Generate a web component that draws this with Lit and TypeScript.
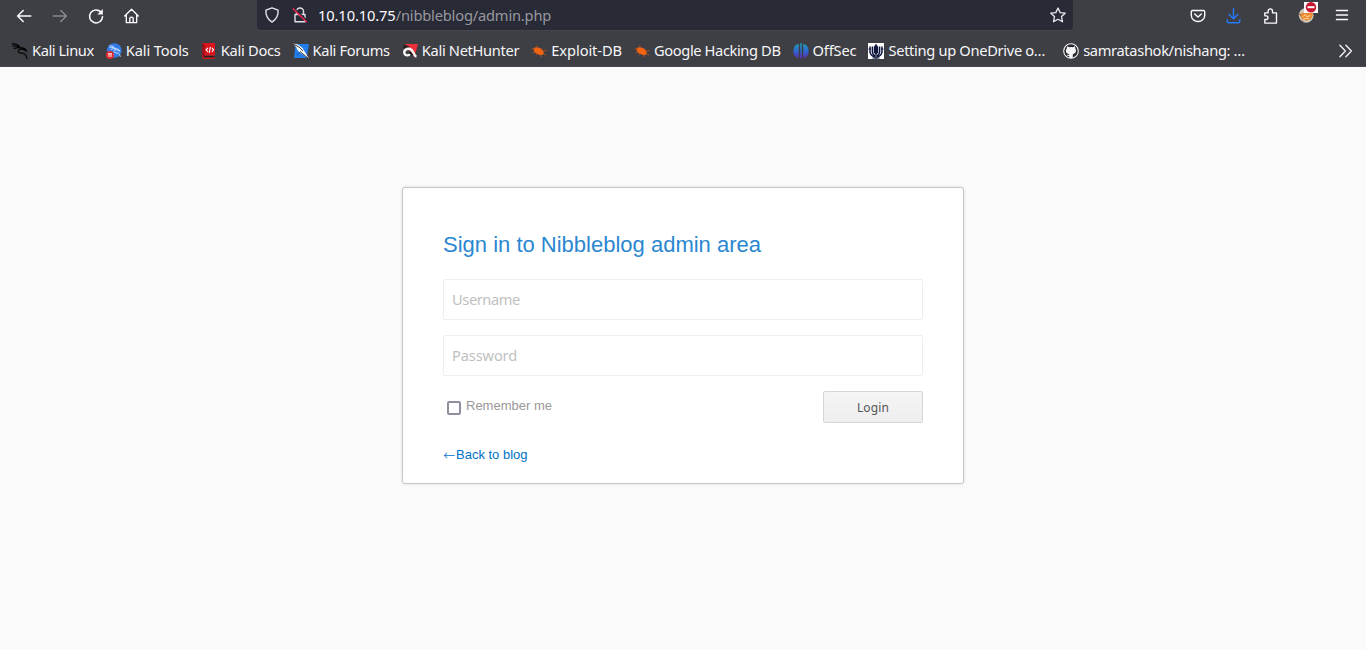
import { LitElement, html, css, svg } from "lit";
import { customElement } from "lit/decorators.js";
import { styleMap } from "lit/directives/style-map.js";

const line = (d: string, color = "#fbfbfe", w = 1.5) =>
  svg`<path d=${d} fill="none" stroke=${color} stroke-width=${w} stroke-linecap="round" stroke-linejoin="round"/>`;

const dragon = (color: string) => svg`
  <path d="M0.3 .8C4 .6 6.5 1.5 8 4.6M.8 3.1C4 2.4 6.5 3.1 8.4 4.9M2.4 5.6C4.5 4.4 6.5 4.3 8.6 4.9C11.6 4.4 13.6 5.6 14.6 8L11.4 6.4C8.2 5.4 5.8 6.8 6.3 8.8C6.9 10.8 10 9.6 12.7 11C14.3 12 14.6 13.5 15 15.4" fill="none" stroke=${color} stroke-width="1.2" stroke-linecap="round"/>`;

const bug = svg`
  <path d="M2.6 5.2C5 3.3 9 4.4 11.8 7.4C13.5 9.8 12.6 11.8 10.5 12C7.5 12.2 2.8 9.5 2.6 7Z" fill="#f26411"/>
  <path d="M.6 6L4 6M5.5 2.5L7 5.2M10 5L11 7.5M12 8L15.5 7.4M12 10L15 12.4M9.5 11.5L10.5 14M4 9L1.5 10.2M6.5 10.5L5 12.2" stroke="#b5501f" stroke-width=".9" fill="none"/>`;

const icons: Record<string, unknown> = {
  back: line("M14.8 8H1.6M7.2 2.5L1.6 8L7.2 13.5"),
  forward: line("M1.2 8H14.4M8.8 2.5L14.4 8L8.8 13.5", "#88888d"),
  reload: svg`${line("M13.4 4.8A6.5 6.5 0 1 0 14.5 8.5")}<path d="M14.8 1V6.5H9.3Z" fill="#fbfbfe"/>`,
  home: line("M.7 8L7.5 1.2L14.3 8M2.3 7V14.6H12.7V7M5.8 14.3V10.3Q5.8 9.2 7.5 9.2Q9.2 9.2 9.2 10.3V14.3", "#fbfbfe", 1.35),
  shield: line("M8 .9L14.1 3.2Q14.6 10.8 8 15.1Q1.4 10.8 1.9 3.2Z", "#e3e3e8", 1.4),
  lock: svg`${line("M4.5 7.3V4.5A3.5 3.5 0 0 1 11.5 4.5V7.3M3 7.5H13V14.8H3Z", "#e0e0e5", 1.4)}${line("M2 1.4L15 13.6", "#282a36", 1.5)}${line("M1.2 1.9L14.4 14.7", "#e22850", 1.5)}`,
  star: line("M8 1L10.2 5.6L15.2 6.2L11.5 9.6L12.5 14.8L8 12.3L3.5 14.8L4.5 9.6L.8 6.2L5.8 5.6Z", "#e9e9ee", 1.3),
  pocket: line("M2.5 2.5H13.5Q14.7 2.5 14.7 3.7V7.5A6.7 6 0 0 1 1.3 7.5V3.7Q1.3 2.5 2.5 2.5ZM4.7 6L8 9.1L11.3 6", "#fbfbfe", 1.4),
  download: line("M7.5 .5V10.5M3.1 6.4L7.5 10.7L11.9 6.4M1.2 11.8V13.3Q1.2 14.8 2.7 14.8H12.3Q13.8 14.8 13.8 13.3V11.8", "#2779ff", 1.4),
  puzzle: line("M6.1 4.8V3A2.2 2.2 0 0 1 10.5 3V4.8H14.5V15.1H2.8V11.5H4.6A1.9 1.9 0 0 0 4.6 7.8H2.8V4.8Z", "#fbfbfe", 1.35),
  menu: line("M2.4 2.5H13.6M2.4 7H13.6M2.4 11.5H13.6", "#fbfbfe", 1.3),
  more: line("M2.9 2.3L8.4 8L2.9 13.7M8.9 2.3L14.4 8L8.9 13.7", "#f0f0f5", 1.4),
  linux: dragon("#050505"),
  tools: svg`<circle cx="8.3" cy="7.5" r="7.3" fill="#347de9"/><g transform="translate(3.4 2.4) scale(.72)">${dragon("#d8e8ff")}</g><circle cx="4" cy="12" r="4" fill="#e22b30"/><path d="M2 10.8H6M3 10.8V14M5 10.8V14" stroke="#fff" stroke-width=".9"/>`,
  docs: svg`<path d="M1.5 0H14V12.5H3V14H14V16H3Q1.5 16 1.5 14Z" fill="#d9161d"/><path d="M1.5 1H3.7V12.5L1.5 14Z" fill="#9e0c17"/><path d="M3 13H13.5V14.5H3Z" fill="#222"/><path d="M6.9 4.8L5.1 6.8L6.9 8.8M10.9 4.8L12.6 6.8L10.9 8.8M9.4 4L8.2 9.8" fill="none" stroke="#fff" stroke-width="1.1"/>`,
  forums: svg`<path d="M2.5 1H16L13.6 15H1Z" fill="#227ce9"/><path d="M0 .5L5 1.5L9.5 5L12 9L16 15.5L9 11L5 8L3 4Z" fill="#f5f5f3"/><path d="M0 1L6 4L10 8M7 8.5L15.5 15.5" fill="none" stroke="#4b423c" stroke-width="1"/><path d="M4 12L7 9.5" stroke="#1556b4"/>`,
  nethunter: svg`<path d="M2 1H16L12.2 14.5L10 10L4 5Z" fill="#ee303b"/><path d="M2 1L8 4L4 6L1 5Z" fill="#222"/><path d="M14.5 13.5C11.5 13 11.8 7.2 8 6C4.5 5 1.4 7.5 2.5 10.5C3.5 12.9 7 13 7.5 11" fill="none" stroke="#f7f7f7" stroke-width="2.4"/><path d="M7.5 8.8L10.5 12" stroke="#151517" stroke-width="1.6"/>`,
  bug,
  offsec: svg`<defs><linearGradient id="offsec" gradientUnits="userSpaceOnUse" x1="0" y1="0" x2="0" y2="16"><stop stop-color="#1aa4bc"/><stop offset=".55" stop-color="#3161cc"/><stop offset="1" stop-color="#6427bb"/></linearGradient></defs><path d="M5.7.8V15A7.4 7.4 0 0 1 5.7.8ZM7.2.3H8.8V15.7H7.2ZM10.3.8A7.4 7.4 0 0 1 10.3 15Z" fill="url(#offsec)"/>`,
  onedrive: svg`<path d="M0 0H16V16H0Z" fill="#fff"/><path d="M8 .8L10.2 4V9.5L8 12L5.8 9.5V4Z" fill="#11183f"/><path d="M4.4 3.4V9Q4.6 12 7.4 13M11.6 3.4V9Q11.4 12 8.6 13M2 3.5V9Q2.5 13 7.5 14.2M14 3.5V9Q13.5 13 8.5 14.2" fill="none" stroke="#11183f" stroke-width="1.5"/><path d="M8 11V16M4.5 15H11.5M.5 6H3M13 6H15.5" stroke="#11183f"/>`,
  github: svg`<circle cx="8" cy="8" r="7.3" fill="#28272d" stroke="#f4f4f4" stroke-width="1.1"/><path d="M4 3.2L6.3 4.3Q8 3.9 9.7 4.3L12 3.2L12.3 5.5Q14 8 12 10Q11 11 9.8 11.2V15H6.2V13Q4.5 13.4 3.5 11.8L6.2 12V11.2Q3 10.6 2.9 8Q2.8 6.6 3.8 5.5Z" fill="#f6f6f6"/>`,
  profile: svg`<circle cx="8.2" cy="7.3" r="7.4" fill="#cfc6bb"/><path d="M1.8 6Q5 4 8 5H15Q14.5 12.4 8.4 12.6Q3 12.4 1.8 6Z" fill="#ed8a2c"/><path d="M4.5 8.6L7.5 6.8L9 8.8L12.5 7.5M5.5 11Q8.5 9.4 11 11" fill="none" stroke="#f9d8ad"/><path d="M0 5.5L3 7.5M3 12.5L6 14.4" stroke="#80604c"/>`,
};

const icon = (name: string) => html`<svg class="icon ${name}" width="16" height="16" viewBox="0 0 16 16">${icons[name]}</svg>`;

interface Bookmark { icon: string; label: string; tracking: number; }

const bookmarks: Bookmark[] = [
  { icon: "linux", label: "Kali Linux", tracking: -0.42 },
  { icon: "tools", label: "Kali Tools", tracking: -0.15 },
  { icon: "docs", label: "Kali Docs", tracking: -0.27 },
  { icon: "forums", label: "Kali Forums", tracking: -0.34 },
  { icon: "nethunter", label: "Kali NetHunter", tracking: -0.32 },
  { icon: "bug", label: "Exploit-DB", tracking: -0.08 },
  { icon: "bug", label: "Google Hacking DB", tracking: -0.39 },
  { icon: "offsec", label: "OffSec", tracking: -0.16 },
  { icon: "onedrive", label: "Setting up OneDrive o…", tracking: -0.32 },
  { icon: "github", label: "samratashok/nishang: …", tracking: -0.34 },
];

@customElement("browser-chrome")
class BrowserChrome extends LitElement {
  static styles = css`
    :host { display: flex; flex-direction: column; height: 67px; flex: none; box-sizing: border-box; background: #3e3f44; color: #f6f6f9; font: 14.667px "Noto Sans", sans-serif; border-bottom: 1px solid #4a4655; }
    svg { display: block; flex: none; overflow: visible; }
    .nav { display: flex; height: 31px; align-items: center; flex: none; }
    .left { display: flex; gap: 20px; padding-left: 16px; width: 241px; height: 31px; align-items: center; }
    .url { display: flex; align-items: center; box-sizing: border-box; width: 816px; height: 31px; background: #282a36; padding: 0 7px; border-bottom: 1px solid #45464d; border-radius: 0 0 4px 4px; }
    .shield { margin-right: 12px; }
    .address { margin-left: 10px; padding-bottom: 1px; flex: 1; color: #98989f; white-space: pre; letter-spacing: -0.18px; line-height: 20px; }
    .host { color: #fbfbfe; letter-spacing: -0.11px; }
    .right { display: flex; gap: 20px; flex: 1; padding: 0 16px; justify-content: flex-end; }
    .user { display: grid; position: relative; }
    .badge { position: absolute; left: 6px; top: -6px; }
    .bookmarks { display: flex; height: 35px; align-items: center; padding: 4px 13px 0 12px; box-sizing: border-box; }
    .list { display: flex; gap: 12px; flex: 1; }
    .item { display: flex; align-items: center; gap: 4px; white-space: nowrap; line-height: 20px; }
    .name { padding-bottom: 2px; }
    .item:last-child { margin-left: 6px; }
  `;
  render() {
    return html`
      <nav class="nav">
        <div class="left">${["back", "forward", "reload", "home"].map(icon)}</div>
        <div class="url">${icon("shield")}${icon("lock")}<span class="address"><span class="host">10.10.10.75</span>/nibbleblog/admin.php</span>${icon("star")}</div>
        <div class="right">
          ${["pocket", "download", "puzzle"].map(icon)}
          <span class="user">${icon("profile")}<svg class="badge" width="14" height="11" viewBox="0 0 14 11"><path d="M0 0H14V11H0Z" fill="#fff"/><circle cx="7" cy="5.2" r="5.2" fill="#c9152f"/><path d="M3.5 4.2H10.5V6.2H3.5Z" fill="#fff"/></svg></span>
          ${icon("menu")}
        </div>
      </nav>
      <div class="bookmarks">
        <div class="list">${bookmarks.map((b) => html`<span class="item">${icon(b.icon)}<span class="name" style=${styleMap({ letterSpacing: `${b.tracking}px` })}>${b.label}</span></span>`)}</div>
        ${icon("more")}
      </div>`;
  }
}

@customElement("login-card")
class LoginCard extends LitElement {
  static styles = css`
    :host { display: block; box-sizing: border-box; width: 562px; height: 297px; padding: 41px 40px 40px; background: #fff; border: 1px solid #c6c6c6; border-radius: 3px; box-shadow: 0 0 3px rgba(0,0,0,.12); font: 13px "Liberation Sans", Arial, sans-serif; color: #999; }
    .title { margin: 0 0 19px; font-size: 22px; line-height: 31px; font-weight: 400; color: #2a87d0; white-space: nowrap; }
    .field { display: block; box-sizing: border-box; width: 100%; height: 41px; margin: 0 0 15px; padding: 0 8px 2px; border: 1px solid #eee; border-radius: 2px; background: #fff; font: 14.667px "Noto Sans", sans-serif; letter-spacing: -0.42px; outline: none; }
    .field[type="password"] { letter-spacing: -0.15px; }
    .field::placeholder { color: #bfbfbf; opacity: 1; }
    .actions { display: flex; justify-content: space-between; height: 32px; }
    .remember { display: flex; align-items: flex-start; padding-left: 4px; line-height: 15px; }
    .check { appearance: none; box-sizing: border-box; width: 14px; height: 14px; margin: 10px 5px 0 0; border: 2px solid #8f8f9d; border-radius: 2px; background: #fff; }
    .label { margin-top: 7px; }
    .login { width: 100px; height: 32px; padding: 0; border: 1px solid #d5d5d5; border-radius: 2px; background: linear-gradient(#f5f5f5, #eee); color: #555; font: 12px "Noto Sans", sans-serif; letter-spacing: .15px; }
    .back { display: flex; width: max-content; margin-top: 24px; line-height: 16px; color: #0071c5; text-decoration: none; white-space: nowrap; }
    .arrow { width: 13px; font-family: "DejaVu Sans", sans-serif; font-size: 14.5px; font-weight: 200; }
  `;
  render() {
    return html`
      <h1 class="title">Sign in to Nibbleblog admin area</h1>
      <input class="field" placeholder="Username" />
      <input class="field" type="password" placeholder="Password" />
      <div class="actions">
        <label class="remember"><input class="check" type="checkbox" /><span class="label">Remember me</span></label>
        <button class="login">Login</button>
      </div>
      <a class="back" href="#"><span class="arrow">←</span>Back to blog</a>`;
  }
}

@customElement("app-root")
class AppRoot extends LitElement {
  static styles = css`
    :host { display: flex; flex-direction: column; height: 100vh; background: #fafafa; overflow: hidden; }
    .page { display: flex; justify-content: center; align-items: flex-start; padding-top: 120px; }
  `;
  render() {
    return html`<browser-chrome></browser-chrome><main class="page"><login-card></login-card></main>`;
  }
}
